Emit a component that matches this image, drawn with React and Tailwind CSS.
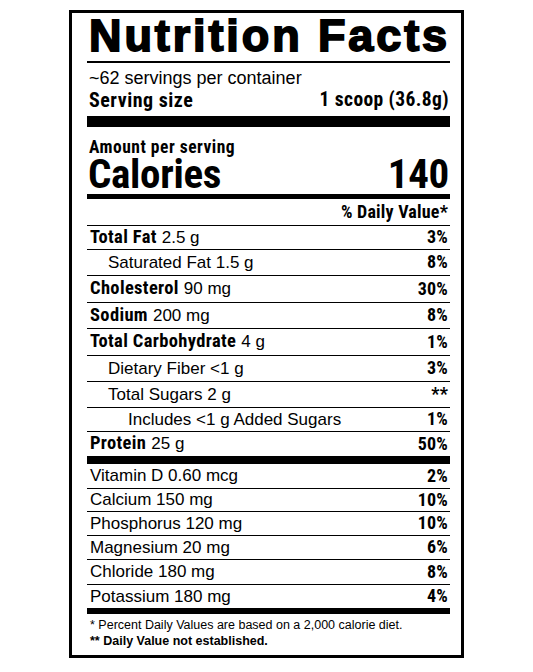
import React from "react";

const SANS = "font-['Liberation_Sans',Arial,sans-serif]";
const COND = "font-['Roboto_Condensed','Liberation_Sans',Arial,sans-serif]";

const nutrients = [
  { name: "Total Fat", amount: "2.5 g", dv: "3%", bold: true, h: 24 },
  { name: "Saturated Fat 1.5 g", dv: "8%", indent: 1, h: 26 },
  { name: "Cholesterol", amount: "90 mg", dv: "30%", bold: true, h: 27 },
  { name: "Sodium", amount: "200 mg", dv: "8%", bold: true, h: 26 },
  { name: "Total Carbohydrate", amount: "4 g", dv: "1%", bold: true, h: 27 },
  { name: "Dietary Fiber <1 g", dv: "3%", indent: 1, h: 26 },
  { name: "Total Sugars 2 g", dv: "**", indent: 1, h: 26 },
  { name: "Includes <1 g Added Sugars", dv: "1%", indent: 2, h: 24 },
  { name: "Protein", amount: "25 g", dv: "50%", bold: true, h: 24, last: true },
];

const minerals = [
  { name: "Vitamin D 0.60 mcg", dv: "2%", h: 25 },
  { name: "Calcium 150 mg", dv: "10%", h: 23 },
  { name: "Phosphorus 120 mg", dv: "10%", h: 24 },
  { name: "Magnesium 20 mg", dv: "6%", h: 24 },
  { name: "Chloride 180 mg", dv: "8%", h: 25 },
  { name: "Potassium 180 mg", dv: "4%", h: 23, last: true },
];

const Row = ({ item }) => {
  const pad = item.indent === 2 ? "pl-[41px]" : item.indent === 1 ? "pl-[21px]" : "pl-[3px]";
  return (
    <div
      className={`flex items-center justify-between pr-[2px] ${pad} ${
        item.last ? "" : "border-b border-black"
      }`}
      style={{ height: item.h }}
    >
      <span className="text-[17px] leading-none">
        {item.bold && (
          <span className={`${COND} font-bold text-[18.5px] tracking-[0.35px] mr-[5px]`}>{item.name}</span>
        )}
        {item.bold ? item.amount : item.name}
      </span>
      <span className={`${COND} font-bold text-[18px] leading-none tracking-[0.2px]`}>
        {item.dv}
      </span>
    </div>
  );
};

const App = () => {
  return (
    <div className={`bg-white min-h-screen w-full pt-[10px] text-black ${SANS}`}>
      <div className="mx-auto w-[395px] h-[648px] border-[3px] border-black pl-[15px] pr-[11px] flex flex-col">
        <div className="h-[48px] flex items-end pb-[3px]">
          <h1 className="text-[45px] leading-none font-bold tracking-[2.9px] [-webkit-text-stroke:1.8px_black] pl-[2px] whitespace-nowrap">
            Nutrition Facts
          </h1>
        </div>
        <div className="h-[1.5px] bg-black" />
        <div className="h-[24px] flex items-end pl-[2px] text-[18px] leading-none">
          ~62 servings per container
        </div>
        <div
          className={`h-[26px] flex items-center justify-between pl-[2px] pr-[1px] ${COND} font-bold text-[19px] leading-none tracking-[0.4px]`}
        >
          <span className="text-[20px] tracking-[0.5px]">Serving size</span>
          <span className="text-[19.5px]">1 scoop (36.8g)</span>
        </div>
        <div className="mt-[3px] h-[11px] bg-black" />
        <div
          className={`h-[28px] flex items-end pl-[2px] ${COND} font-bold text-[17.5px] leading-[16px] tracking-[0.5px]`}
        >
          Amount per serving
        </div>
        <div
          className={`h-[37px] flex items-end pb-[3px] justify-between pl-[1px] pr-[1px] ${COND} font-bold text-[41px] leading-[30px] tracking-[-0.3px]`}
        >
          <span>Calories</span>
          <span>140</span>
        </div>
        <div className="mt-[2px] h-[5px] bg-black" />
        <div
          className={`h-[27px] flex items-center justify-end pr-[2px] ${COND} font-bold text-[18px] leading-none tracking-[0.2px] border-b border-black`}
        >
          % Daily Value*
        </div>
        {nutrients.map((item) => (
          <Row key={item.name} item={item} />
        ))}
        <div className="h-[8px] bg-black" />
        {minerals.map((item) => (
          <Row key={item.name} item={item} />
        ))}
        <div className="h-[6px] bg-black" />
        <div className="pl-[3px] pt-[3px] text-[12.5px] leading-[16px]">
          <p>* Percent Daily Values are based on a 2,000 calorie diet.</p>
          <p className="font-bold">** Daily Value not established.</p>
        </div>
      </div>
    </div>
  );
};

export default App;
